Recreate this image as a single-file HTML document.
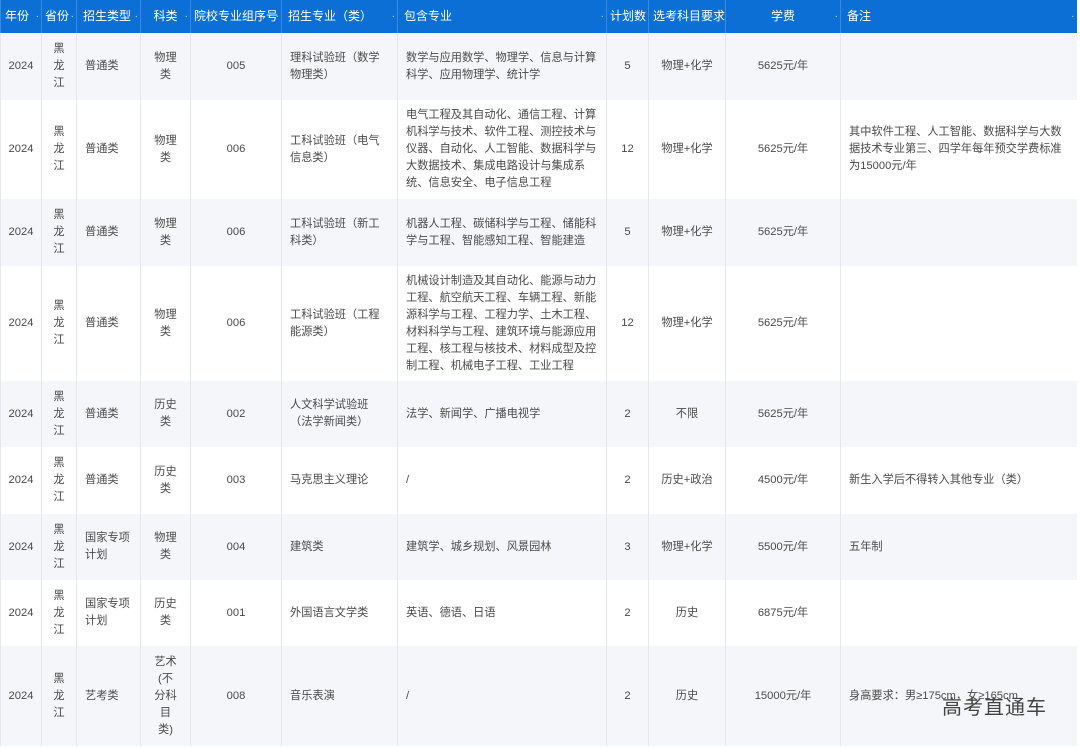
<!DOCTYPE html>
<html><head><meta charset="utf-8"><style>
body{margin:0;width:1080px;height:748px;overflow:hidden;background:#fff;font-family:"Liberation Sans","Noto Sans CJK SC",sans-serif;}
table{border-collapse:collapse;table-layout:fixed;width:1076px;position:absolute;left:0;top:0;}
td,th{font-size:11.2px;line-height:17px;color:#4a4a4a;border-left:1px solid #e4e8ee;padding:0 8px;font-weight:normal;overflow:hidden;}
th{background:#0b6fd6;color:#fff;height:33px;text-align:left;border-left:1px solid #3b8ae0;position:relative;padding:0 6px;white-space:nowrap;font-size:12px}
th:after{content:"·";position:absolute;right:2px;top:8px;color:#cfe2f8;font-size:10px}
tr:nth-child(even) td{background:#f4f6f9}
.c{text-align:center;padding:0 2px}
.wm{position:absolute;left:942px;top:691px;font-size:20px;color:#444;font-family:"Noto Sans CJK SC",sans-serif;letter-spacing:1px}
</style></head><body>
<table>
<colgroup><col style="width:41px"><col style="width:35px"><col style="width:64px"><col style="width:50px"><col style="width:91px"><col style="width:116px"><col style="width:209px"><col style="width:42px"><col style="width:77px"><col style="width:115px"><col style="width:236px"></colgroup>
<tr><th style="padding:0 4px">年份</th><th style="padding:0 3px">省份</th><th>招生类型</th><th style="text-align:center">科类</th><th style="padding:0 3px">院校专业组序号</th><th>招生专业（类）</th><th>包含专业</th><th style="padding:0 3px">计划数</th><th style="padding:0 4px">选考科目要求</th><th style="text-align:center">学费</th><th>备注</th></tr>
<tr style="height:67px"><td class="c">2024</td><td class="c">黑<br>龙<br>江</td><td>普通类</td><td class="c">物理<br>类</td><td class="c">005</td><td>理科试验班（数学物理类）</td><td>数学与应用数学、物理学、信息与计算科学、应用物理学、统计学</td><td class="c">5</td><td class="c">物理+化学</td><td class="c">5625元/年</td><td></td></tr>
<tr style="height:99px"><td class="c">2024</td><td class="c">黑<br>龙<br>江</td><td>普通类</td><td class="c">物理<br>类</td><td class="c">006</td><td>工科试验班（电气信息类）</td><td>电气工程及其自动化、通信工程、计算机科学与技术、软件工程、测控技术与仪器、自动化、人工智能、数据科学与大数据技术、集成电路设计与集成系统、信息安全、电子信息工程</td><td class="c">12</td><td class="c">物理+化学</td><td class="c">5625元/年</td><td>其中软件工程、人工智能、数据科学与大数据技术专业第三、四学年每年预交学费标准为15000元/年</td></tr>
<tr style="height:67px"><td class="c">2024</td><td class="c">黑<br>龙<br>江</td><td>普通类</td><td class="c">物理<br>类</td><td class="c">006</td><td>工科试验班（新工科类）</td><td>机器人工程、碳储科学与工程、储能科学与工程、智能感知工程、智能建造</td><td class="c">5</td><td class="c">物理+化学</td><td class="c">5625元/年</td><td></td></tr>
<tr style="height:115px"><td class="c">2024</td><td class="c">黑<br>龙<br>江</td><td>普通类</td><td class="c">物理<br>类</td><td class="c">006</td><td>工科试验班（工程能源类）</td><td>机械设计制造及其自动化、能源与动力工程、航空航天工程、车辆工程、新能源科学与工程、工程力学、土木工程、材料科学与工程、建筑环境与能源应用工程、核工程与核技术、材料成型及控制工程、机械电子工程、工业工程</td><td class="c">12</td><td class="c">物理+化学</td><td class="c">5625元/年</td><td></td></tr>
<tr style="height:66px"><td class="c">2024</td><td class="c">黑<br>龙<br>江</td><td>普通类</td><td class="c">历史<br>类</td><td class="c">002</td><td>人文科学试验班（法学新闻类）</td><td>法学、新闻学、广播电视学</td><td class="c">2</td><td class="c">不限</td><td class="c">5625元/年</td><td></td></tr>
<tr style="height:67px"><td class="c">2024</td><td class="c">黑<br>龙<br>江</td><td>普通类</td><td class="c">历史<br>类</td><td class="c">003</td><td>马克思主义理论</td><td>/</td><td class="c">2</td><td class="c">历史+政治</td><td class="c">4500元/年</td><td>新生入学后不得转入其他专业（类）</td></tr>
<tr style="height:66px"><td class="c">2024</td><td class="c">黑<br>龙<br>江</td><td>国家专项计划</td><td class="c">物理<br>类</td><td class="c">004</td><td>建筑类</td><td>建筑学、城乡规划、风景园林</td><td class="c">3</td><td class="c">物理+化学</td><td class="c">5500元/年</td><td>五年制</td></tr>
<tr style="height:66px"><td class="c">2024</td><td class="c">黑<br>龙<br>江</td><td>国家专项计划</td><td class="c">历史<br>类</td><td class="c">001</td><td>外国语言文学类</td><td>英语、德语、日语</td><td class="c">2</td><td class="c">历史</td><td class="c">6875元/年</td><td></td></tr>
<tr style="height:100px"><td class="c">2024</td><td class="c">黑<br>龙<br>江</td><td>艺考类</td><td class="c">艺术<br>(不<br>分科<br>目<br>类)</td><td class="c">008</td><td>音乐表演</td><td>/</td><td class="c">2</td><td class="c">历史</td><td class="c">15000元/年</td><td>身高要求：男≥175cm，女≥165cm</td></tr>
</table>
<div class="wm">高考直通车</div>
</body></html>
